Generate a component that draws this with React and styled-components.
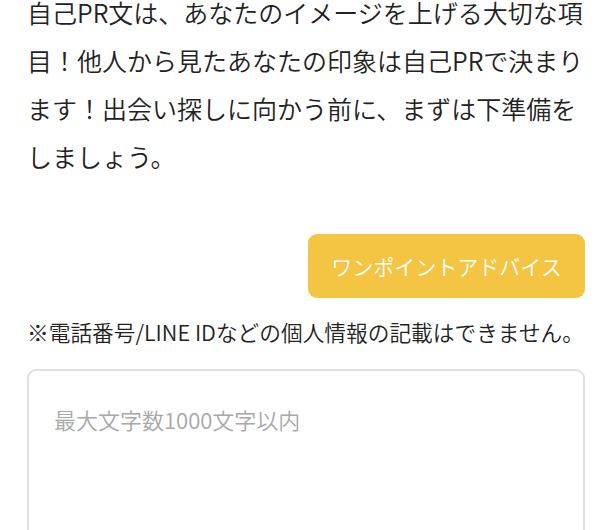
import React from 'react';
import styled, { createGlobalStyle } from 'styled-components';

const GlobalStyle = createGlobalStyle`
  body {
    margin: 0;
    background: #fff;
    font-family: 'Noto Sans CJK JP', 'Noto Sans', sans-serif;
    font-weight: 350;
    color: #222;
    overflow: hidden;
  }
`;

const Page = styled.div`
  padding: 0 15px 0 27px;
`;

const Intro = styled.p`
  margin: -12px 0 0;
  font-size: 25px;
  line-height: 48px;
  color: #222;
`;

const ButtonRow = styled.div`
  display: flex;
  justify-content: flex-end;
  margin-top: 54px;
`;

const AdviceButton = styled.button`
  width: 277px;
  height: 64px;
  border: none;
  border-radius: 9px;
  background: #f4c443;
  color: #fff;
  font-family: inherit;
  font-weight: 350;
  font-size: 21px;
  cursor: pointer;
`;

const Notice = styled.p`
  margin: 17px 0 0;
  font-size: 21.7px;
  line-height: 34px;
  color: #222;
  white-space: nowrap;
`;

const PrField = styled.textarea`
  display: block;
  box-sizing: border-box;
  width: 100%;
  height: 240px;
  margin-top: 20px;
  padding: 32px 25px;
  border: 2px solid #e0e0e0;
  border-radius: 9px;
  font-family: inherit;
  font-weight: 350;
  font-size: 22px;
  line-height: 32px;
  color: #222;
  resize: none;
  outline: none;

  &::placeholder {
    color: #a8a8a8;
  }
`;

export default function App() {
  return (
    <Page>
      <GlobalStyle />
      <Intro>
        自己PR文は、あなたのイメージを上げる大切な項目！他人から見たあなたの印象は自己PRで決まります！出会い探しに向かう前に、まずは下準備をしましょう。
      </Intro>
      <ButtonRow>
        <AdviceButton>ワンポイントアドバイス</AdviceButton>
      </ButtonRow>
      <Notice>※電話番号/LINE IDなどの個人情報の記載はできません。</Notice>
      <PrField placeholder="最大文字数1000文字以内" />
    </Page>
  );
}
